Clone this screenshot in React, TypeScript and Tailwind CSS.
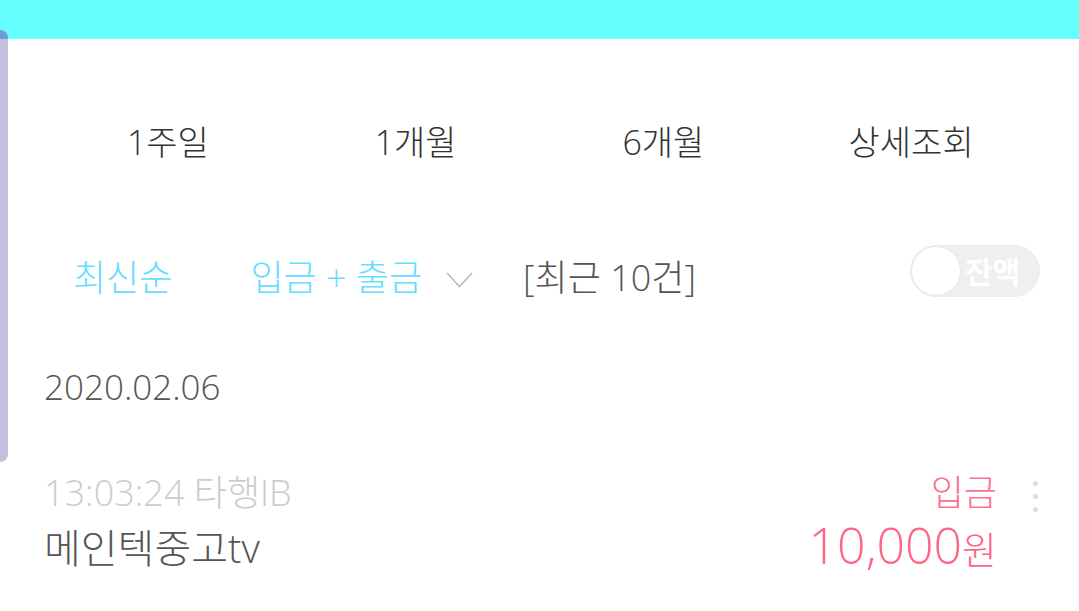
const font = { fontFamily: '"Open Sans", "Noto Sans CJK KR", sans-serif' };

export default function App() {
  const tabs = ['1주일', '1개월', '6개월', '상세조회'];

  return (
    <div className="relative w-[1079px] h-[611px] overflow-hidden bg-white" style={font}>
      {/* Top band */}
      <div className="h-[39px] bg-[#66ffff]" />

      {/* Left side handle */}
      <div className="absolute left-0 top-[30px] w-[8px] h-[432px] rounded-r-[8px] bg-[#c3bfde] overflow-hidden">
        <div className="h-[9px] bg-[#6d9bd8]" />
      </div>

      {/* Period tabs */}
      <div className="grid grid-cols-4 h-[206px] items-center px-[44px]">
        {tabs.map((t) => (
          <div key={t} className="text-center text-[34px] font-light text-[#333]">
            {t}
          </div>
        ))}
      </div>

      {/* Filters */}
      <div className="flex items-center h-[66px] pl-[73px] pr-[39px]">
        <span className="text-[36px] font-light text-[#66ddff]">최신순</span>
        <span className="ml-[78px] text-[36px] font-light text-[#66ddff]">입금 + 출금</span>
        <svg className="ml-[24px] mt-[4px]" width="27" height="16" viewBox="0 0 27 16" fill="none">
          <polyline points="1,1 13.5,14.5 26,1" stroke="#bbbbbb" strokeWidth="1.6" />
        </svg>
        <span className="ml-[50px] text-[36px] font-light text-[#555]">[최근 10건]</span>
        <div className="ml-auto mb-[14px] flex items-center w-[130px] h-[52px] rounded-full bg-[#efefef] border border-[#ececec]">
          <div className="w-[50px] h-[50px] rounded-full bg-white border border-[#e8e8e8]" />
          <span className="ml-[4px] text-[30px] font-bold text-white">잔액</span>
        </div>
      </div>

      {/* Date */}
      <div className="flex items-center h-[152px] px-[44px]">
        <span className="text-[35px] font-light text-[#555]">2020.02.06</span>
      </div>

      {/* Transaction */}
      <div className="flex pt-[10px] pl-[44px] pr-[41px]">
        <div className="flex-1 flex flex-col">
          <span className="text-[36px] leading-[40px] font-light text-[#cccccc]">13:03:24 타행IB</span>
          <span className="mt-[13px] text-[40px] leading-[44px] font-light text-[#555]">메인텍중고tv</span>
        </div>
        <div className="flex flex-col items-end">
          <span className="text-[36px] leading-[40px] font-light text-[#ff7090]">입금</span>
          <span className="mt-[6px] leading-[52px] text-[#ff6585]">
            <span className="text-[50px] font-light">10,000</span>
            <span className="text-[38px] font-light">원</span>
          </span>
        </div>
        <div className="ml-[36px] flex flex-col gap-[8px] pt-[8px]">
          <div className="w-[5px] h-[5px] rounded-full bg-[#dddddd]" />
          <div className="w-[5px] h-[5px] rounded-full bg-[#dddddd]" />
          <div className="w-[5px] h-[5px] rounded-full bg-[#dddddd]" />
        </div>
      </div>
    </div>
  );
}
